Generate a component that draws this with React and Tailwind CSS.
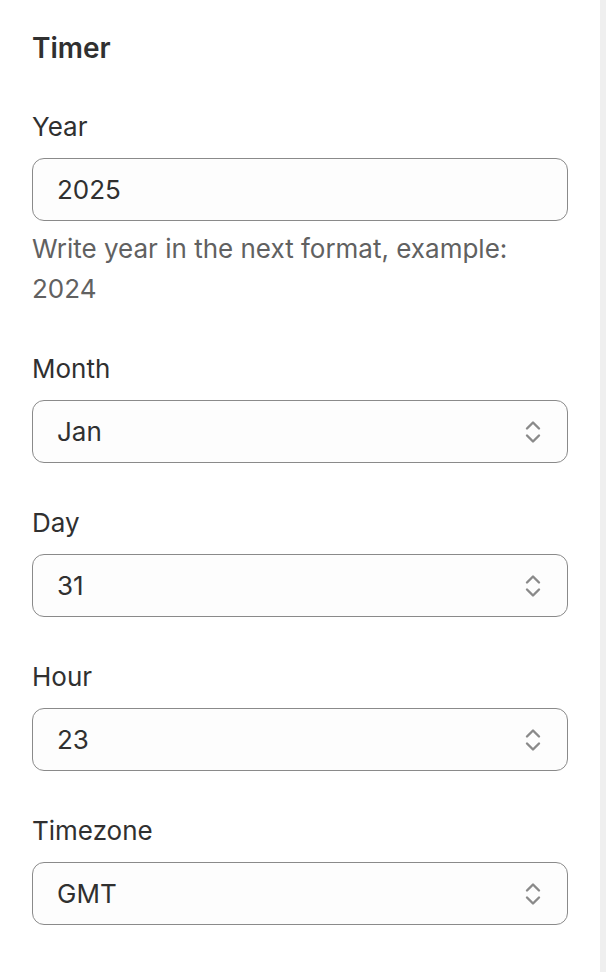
import React from "react";

function Chevrons() {
  return (
    <svg width="16" height="26" viewBox="0 0 16 26" fill="none" className="shrink-0">
      <path d="M2 9.5L8 3.5L14 9.5" stroke="#8a8a8a" strokeWidth="2.4" strokeLinecap="round" strokeLinejoin="round" />
      <path d="M2 16.5L8 22.5L14 16.5" stroke="#8a8a8a" strokeWidth="2.4" strokeLinecap="round" strokeLinejoin="round" />
    </svg>
  );
}

function SelectField({ label, value }) {
  return (
    <div className="flex flex-col">
      <div className="text-[26px] leading-[30px] text-[#303030] mb-4">{label}</div>
      <div className="h-[63px] rounded-[12px] border border-[#8a8a8a] bg-[#fdfdfd] flex items-center justify-between pl-6 pr-[26px]">
        <span className="text-[26px] text-[#303030]">{value}</span>
        <Chevrons />
      </div>
    </div>
  );
}

export default function App() {
  return (
    <div className="flex min-h-[972px] bg-white" style={{ fontFamily: "Inter, 'Noto Sans', sans-serif" }}>
      <div className="flex-1 px-8 pt-8">
        <h2 className="text-[28px] leading-8 font-semibold text-[#303030]">Timer</h2>
        <div className="mt-[48px] flex flex-col gap-[45px]">
          <div className="flex flex-col">
            <div className="text-[26px] leading-[30px] text-[#303030] mb-4">Year</div>
            <div className="h-[63px] rounded-[12px] border border-[#8a8a8a] bg-[#fdfdfd] flex items-center pl-6">
              <span className="text-[26px] text-[#303030]">2025</span>
            </div>
            <div className="mt-[8px] text-[26px] leading-10 text-[#616161]">
              Write year in the next format, example: 2024
            </div>
          </div>
          <SelectField label="Month" value="Jan" />
          <SelectField label="Day" value="31" />
          <SelectField label="Hour" value="23" />
          <SelectField label="Timezone" value="GMT" />
        </div>
      </div>
      <div className="w-[6px] bg-[#efefef]" />
    </div>
  );
}
